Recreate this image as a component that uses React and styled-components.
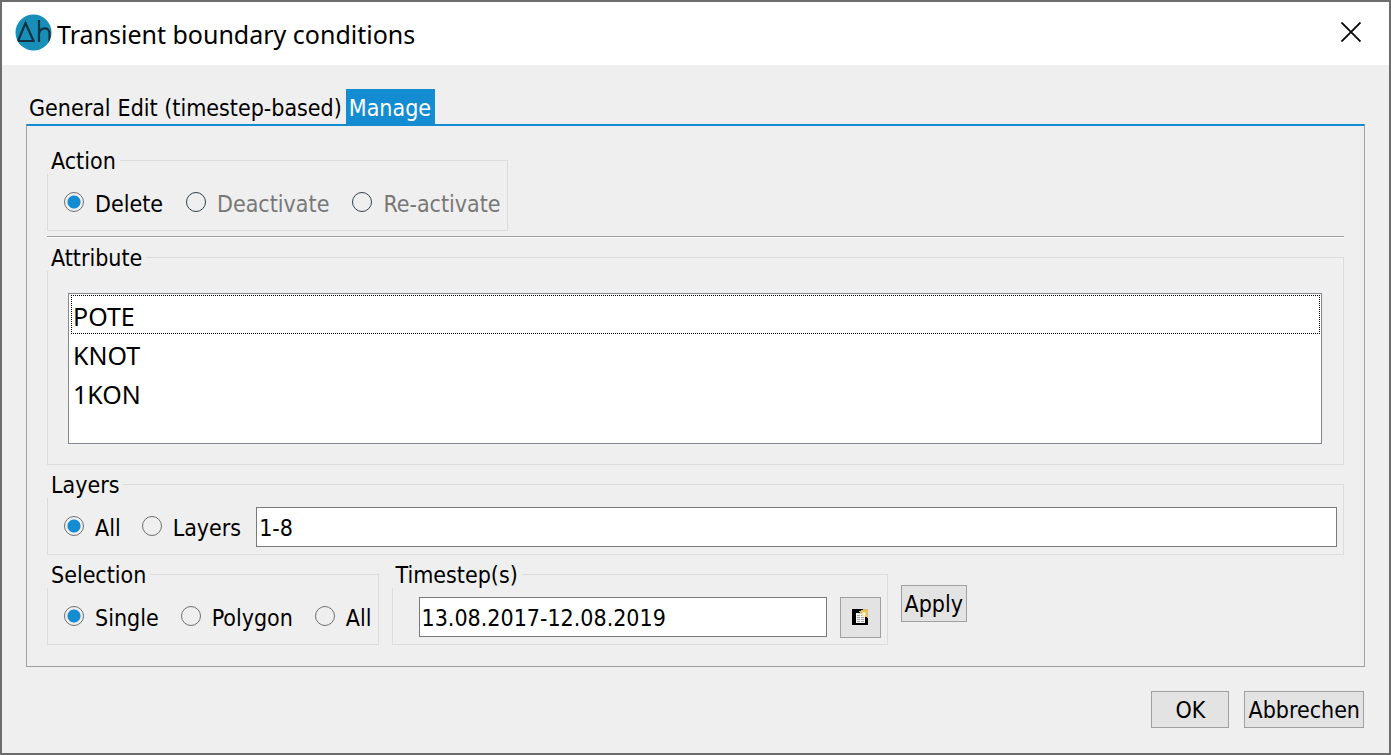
import React, { useState } from 'react'
import styled, { createGlobalStyle } from 'styled-components'

const GlobalStyle = createGlobalStyle`
    * {
        box-sizing: border-box;
    }
    body {
        margin: 0;
        background-color: #6d6d6d;
    }
    body, button, input {
        font-family: "DejaVu Sans Condensed", "DejaVu Sans", sans-serif;
        font-stretch: condensed;
        font-size: 23px;
        line-height: 28px;
        color: #000;
    }
`

const Dialog = styled.main`
    min-height: 100vh;
    display: flex;
    flex-direction: column;
    border: 2px solid #6d6d6d;
    background-color: #efefef;
`

const TitleBar = styled.header`
    height: 63px;
    padding: 0 25px 3px 13px;
    display: flex;
    align-items: center;
    gap: 5px;
    background-color: #FFF;
`

const Logo = styled.svg`
    width: 37px;
    height: 37px;
    flex: none;
`

const Title = styled.h1`
    flex: 1;
    margin: 0;
    padding-top: 4px;
    font-family: "Noto Sans", sans-serif;
    font-size: 25px;
    font-weight: 400;
    line-height: 34px;
`

const CloseButton = styled.button`
    width: 26px;
    height: 26px;
    padding: 0;
    border: none;
    background: none;
    display: flex;
    align-items: center;
    justify-content: center;
`

const Content = styled.div`
    padding: 24px 24px 0;
`

const TabList = styled.div`
    display: flex;
`

const Tab = styled.button`
    height: 35px;
    padding: 2px 4px 0 3px;
    border: none;
    white-space: nowrap;
    background-color: ${props => props.$active ? '#148cd2' : 'transparent'};
    color: ${props => props.$active ? '#FFF' : '#000'};
`

const Panel = styled.section`
    padding: 21px 20px;
    border: 1px solid #a0a0a0;
    border-top: 2px solid #148cd2;
    display: flex;
    flex-direction: column;
    gap: 6px;
`

const Group = styled.fieldset`
    min-width: 0;
    margin: 0;
    padding: 0;
    border: 1px solid #dcdcdc;
    align-self: ${props => props.$fit ? 'flex-start' : 'stretch'};
`

const Legend = styled.legend`
    height: 27px;
    margin-left: -1px;
    padding: 0 4px;
    background-color: #efefef;
`

const Options = styled.div`
    display: flex;
    align-items: center;
    gap: ${props => props.$gap || '23px'};
    height: 56px;
    padding: 9px 6px 7px 16px;
`

const RadioPair = styled.div`
    display: flex;
    gap: 21px;
`

const RadioLabel = styled.label`
    display: flex;
    align-items: center;
    gap: 11px;
    padding-bottom: 2px;
    white-space: nowrap;
    color: ${props => props.$disabled ? '#787878' : '#000'};
`

const RadioText = styled.span`
    padding-top: 4px;
`

const RadioInput = styled.input`
    appearance: none;
    width: 20px;
    height: 20px;
    margin: 0;
    flex: none;
    border: 1px solid #707070;
    border-radius: 50%;

    &:checked {
        background: radial-gradient(circle, #148cd2 6px, transparent 7px);
    }
    &:disabled {
        border-color: #32414b;
    }
`

const Divider = styled.hr`
    width: 100%;
    height: 2px;
    margin: -1px 0 0;
    border: none;
    border-top: 1px solid #a0a0a0;
    background-color: #FFF;
`

const ListWrap = styled.div`
    padding: 22px 21px 20px 20px;
`

const ListBox = styled.select`
    display: block;
    width: 100%;
    height: 151px;
    padding: 1px 1px 1px 2px;
    border: 1px solid #828790;
    border-radius: 0;
    outline: none;
    overflow: hidden;
    background-color: #FFF;
    font-family: "Noto Sans", sans-serif;
    font-size: 25px;
`

const ListItem = styled.option`
    height: 39px;
    min-height: 39px;
    padding: 4px 2px 0;
    line-height: 36px;
    color: #000;

    &:first-child {
        outline: 1px dotted #000;
        outline-offset: -1px;
    }
`

const TextInput = styled.input`
    flex: 1;
    width: 100%;
    min-width: 0;
    height: 40px;
    padding: 2px 3px 0 2px;
    border: 1px solid #7a7a7a;
    border-radius: 0;
    background-color: #FFF;
`

const BottomRow = styled.div`
    display: flex;
    align-items: center;
    gap: 13px;
`

const TimestepRow = styled.div`
    display: flex;
    align-items: center;
    gap: 13px;
    width: 494px;
    height: 56px;
    padding: 9px 6px 7px 26px;
`

const Button = styled.button`
    height: 37px;
    min-width: ${props => props.$wide ? '78px' : '0'};
    padding: 1px 3px 0;
    border: 1px solid #a0a0a0;
    background-color: #e3e3e3;
`

const IconButton = styled(Button)`
    width: 41px;
    height: 41px;
    padding: 0;
    display: flex;
    align-items: center;
    justify-content: center;
`

const Footer = styled.footer`
    display: flex;
    justify-content: flex-end;
    gap: 15px;
    padding: 24px 25px 25px;
`

const TABS = ['General', 'Edit (timestep-based)', 'Manage']
const ATTRIBUTES = ['POTE', 'KNOT', '1KON']

const Radio = ({ label, name, value, onChange, disabled }) => (
    <RadioLabel $disabled={disabled}>
        <RadioInput
            type="radio"
            name={name}
            checked={value === label}
            disabled={disabled}
            onChange={() => onChange(label)}
        />
        <RadioText>{label}</RadioText>
    </RadioLabel>
)

const AppLogo = () => (
    <Logo viewBox="0 0 37 37" aria-hidden="true">
        <defs>
            <clipPath id="disc"><circle cx="18.5" cy="18.5" r="18" /></clipPath>
        </defs>
        <circle cx="18.5" cy="18.5" r="18" fill="#178fb8" />
        <g clipPath="url(#disc)" fill="none" stroke="#12303f" strokeWidth="2.2">
            <path d="M3 27 L10.5 9 L18.5 27 Z" />
            <path d="M24 6 V28 M24 19.5 C25 13.5 34.5 12 34.5 19.5 V28" />
        </g>
    </Logo>
)

const CloseIcon = () => (
    <svg width="20" height="20" viewBox="0 0 20 20" aria-hidden="true">
        <path d="M0.5 0.5 L19.5 19.5 M19.5 0.5 L0.5 19.5" stroke="#000" strokeWidth="1.8" />
    </svg>
)

const TimestepIcon = () => (
    <svg width="16" height="16" viewBox="0 0 16 16" shapeRendering="crispEdges" aria-hidden="true">
        <rect width="16" height="16" fill="#000" />
        <rect x="4" y="4" width="9" height="10" fill="#f4f4f4" />
        <path d="M5 6.5h3M9 6.5h3M5 8.5h3M9 8.5h3M5 10.5h3M9 10.5h3M5 12.5h3M9 12.5h3" stroke="#a5a5a5" />
        <path d="M7 2h2V1h2V0h5v9h-1V8h-2V7h-3V5H8V3H7z" fill="#e3c25c" />
        <rect x="10" y="3" width="4" height="4" fill="#f5e2a0" />
        <rect x="11" y="4" width="2" height="2" fill="#fff" />
    </svg>
)

const App = () => {
    const [tab, setTab] = useState('Manage')
    const [action, setAction] = useState('Delete')
    const [layerMode, setLayerMode] = useState('All')
    const [layers, setLayers] = useState('1-8')
    const [selection, setSelection] = useState('Single')
    const [timesteps, setTimesteps] = useState('13.08.2017-12.08.2019')

    return (
        <Dialog>
            <GlobalStyle />
            <TitleBar>
                <AppLogo />
                <Title>Transient boundary conditions</Title>
                <CloseButton aria-label="Close"><CloseIcon /></CloseButton>
            </TitleBar>
            <Content>
                <TabList role="tablist">
                    {TABS.map(name => (
                        <Tab
                            key={name}
                            role="tab"
                            aria-selected={tab === name}
                            $active={tab === name}
                            onClick={() => setTab(name)}
                        >
                            {name}
                        </Tab>
                    ))}
                </TabList>
                <Panel>
                    <Group $fit>
                        <Legend>Action</Legend>
                        <Options>
                            <Radio label="Delete" name="action" value={action} onChange={setAction} />
                            <Radio label="Deactivate" name="action" value={action} onChange={setAction} disabled />
                            <Radio label="Re-activate" name="action" value={action} onChange={setAction} disabled />
                        </Options>
                    </Group>
                    <Divider />
                    <Group>
                        <Legend>Attribute</Legend>
                        <ListWrap>
                            <ListBox size={4} multiple aria-label="Attribute">
                                {ATTRIBUTES.map(name => <ListItem key={name}>{name}</ListItem>)}
                            </ListBox>
                        </ListWrap>
                    </Group>
                    <Group>
                        <Legend>Layers</Legend>
                        <Options $gap="15px">
                            <RadioPair>
                                <Radio label="All" name="layers" value={layerMode} onChange={setLayerMode} />
                                <Radio label="Layers" name="layers" value={layerMode} onChange={setLayerMode} />
                            </RadioPair>
                            <TextInput
                                aria-label="Layer range"
                                value={layers}
                                onChange={(e) => setLayers(e.target.value)}
                            />
                        </Options>
                    </Group>
                    <BottomRow>
                        <Group>
                            <Legend>Selection</Legend>
                            <Options $gap="22px">
                                <Radio label="Single" name="selection" value={selection} onChange={setSelection} />
                                <Radio label="Polygon" name="selection" value={selection} onChange={setSelection} />
                                <Radio label="All" name="selection" value={selection} onChange={setSelection} />
                            </Options>
                        </Group>
                        <Group>
                            <Legend>Timestep(s)</Legend>
                            <TimestepRow>
                                <TextInput
                                    aria-label="Timesteps"
                                    value={timesteps}
                                    onChange={(e) => setTimesteps(e.target.value)}
                                />
                                <IconButton aria-label="Choose timesteps"><TimestepIcon /></IconButton>
                            </TimestepRow>
                        </Group>
                        <Button>Apply</Button>
                    </BottomRow>
                </Panel>
            </Content>
            <Footer>
                <Button $wide>OK</Button>
                <Button>Abbrechen</Button>
            </Footer>
        </Dialog>
    )
}

export default App
